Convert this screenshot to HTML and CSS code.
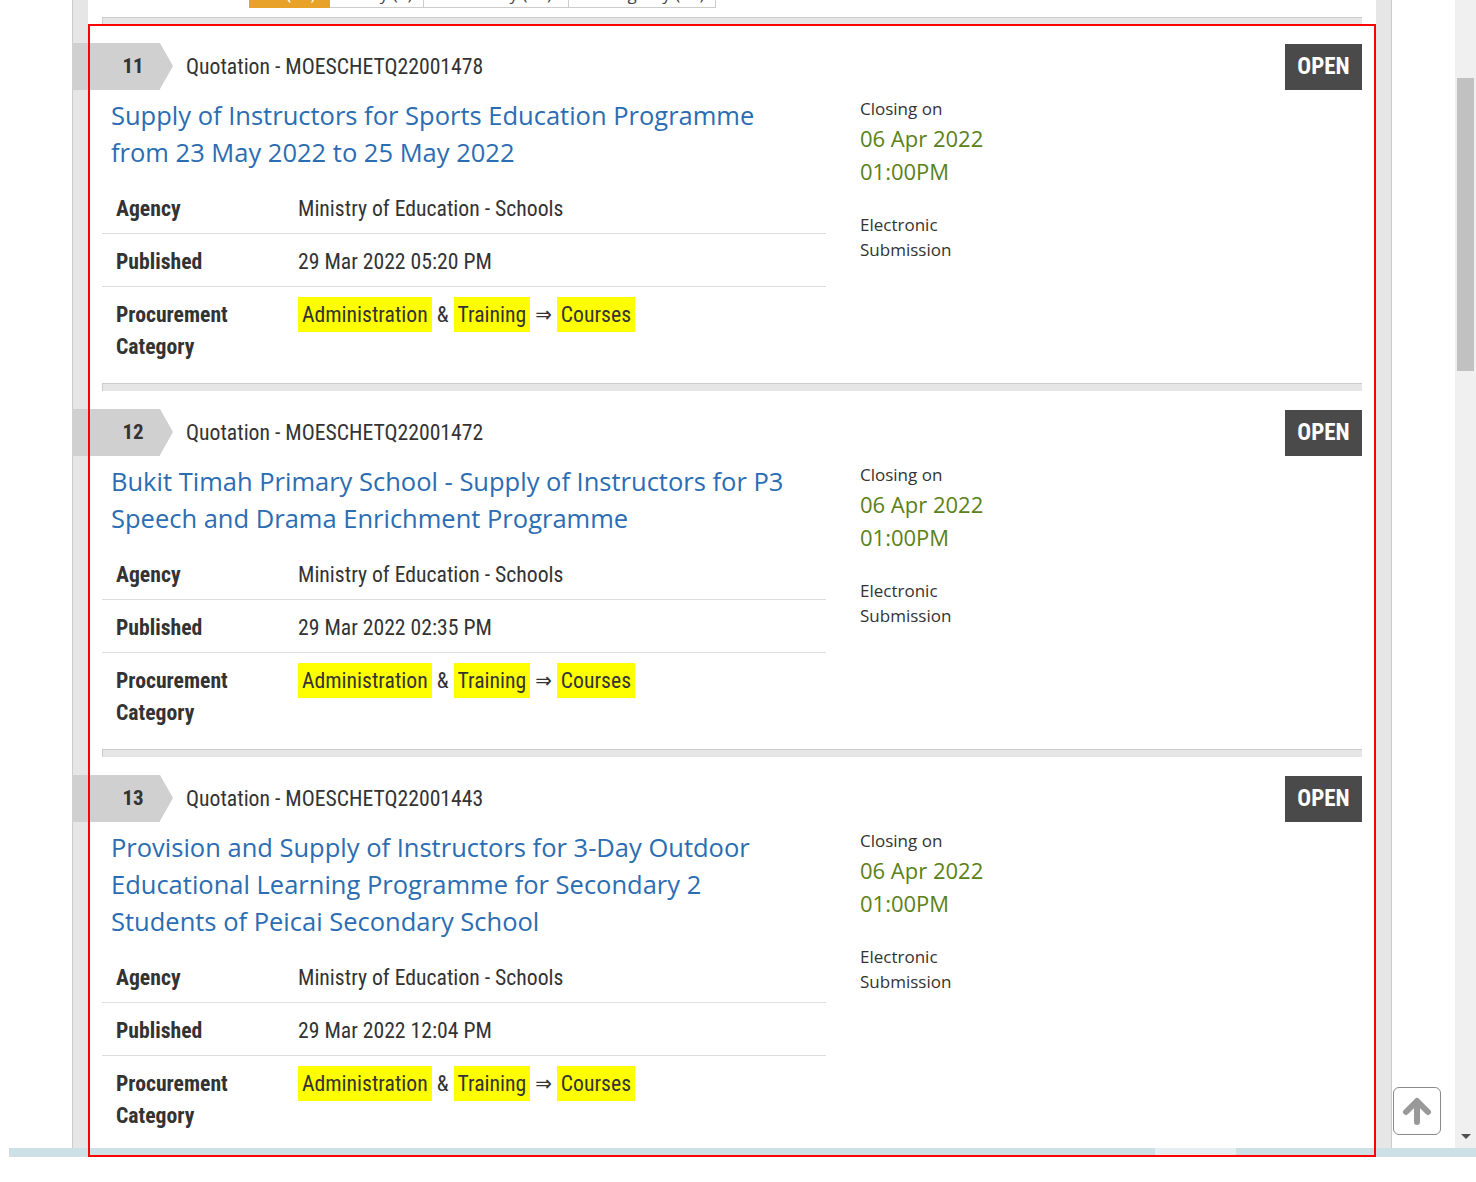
FILE: index.html
```html
<!DOCTYPE html>
<html lang="en">
<head>
<meta charset="utf-8">
<title>Opportunities</title>
<link rel="stylesheet" href="styles.css">
</head>
<body>
<div class="viewport">
  <div class="panel">
    <div class="content">
      <nav class="tabs">
        <span class="tab tab-open active">All (13)</span>
        <span class="tab tab-today">Today (1)</span>
        <span class="tab tab-yday">Yesterday (10)</span>
        <span class="tab tab-week">Closing Any (26)</span>
      </nav>
      <div class="sep"></div>

      <article class="item">
        <header class="item-head">
          <span class="num">11</span>
          <span class="ref">Quotation - MOESCHETQ22001478</span>
          <span class="status">OPEN</span>
        </header>
        <div class="item-body">
          <div class="main">
            <a class="title" href="#">Supply of Instructors for Sports Education Programme from 23 May 2022 to 25 May 2022</a>
            <table class="meta">
              <tr><th>Agency</th><td>Ministry of Education - Schools</td></tr>
              <tr><th>Published</th><td>29 Mar 2022 05:20 PM</td></tr>
              <tr><th>Procurement Category</th><td><span class="hl">Administration</span> &amp; <span class="hl">Training</span> <span class="arr">&rArr;</span> <span class="hl">Courses</span></td></tr>
            </table>
          </div>
          <aside class="side">
            <div class="closing-label">Closing on</div>
            <div class="closing-date">06 Apr 2022 01:00PM</div>
            <div class="submission">Electronic Submission</div>
          </aside>
        </div>
      </article>
      <div class="sep"></div>

      <article class="item">
        <header class="item-head">
          <span class="num">12</span>
          <span class="ref">Quotation - MOESCHETQ22001472</span>
          <span class="status">OPEN</span>
        </header>
        <div class="item-body">
          <div class="main">
            <a class="title" href="#">Bukit Timah Primary School - Supply of Instructors for P3 Speech and Drama Enrichment Programme</a>
            <table class="meta">
              <tr><th>Agency</th><td>Ministry of Education - Schools</td></tr>
              <tr><th>Published</th><td>29 Mar 2022 02:35 PM</td></tr>
              <tr><th>Procurement Category</th><td><span class="hl">Administration</span> &amp; <span class="hl">Training</span> <span class="arr">&rArr;</span> <span class="hl">Courses</span></td></tr>
            </table>
          </div>
          <aside class="side">
            <div class="closing-label">Closing on</div>
            <div class="closing-date">06 Apr 2022 01:00PM</div>
            <div class="submission">Electronic Submission</div>
          </aside>
        </div>
      </article>
      <div class="sep"></div>

      <article class="item">
        <header class="item-head">
          <span class="num">13</span>
          <span class="ref">Quotation - MOESCHETQ22001443</span>
          <span class="status">OPEN</span>
        </header>
        <div class="item-body">
          <div class="main">
            <a class="title" href="#">Provision and Supply of Instructors for 3-Day Outdoor Educational Learning Programme for Secondary 2 Students of Peicai Secondary School</a>
            <table class="meta">
              <tr><th>Agency</th><td>Ministry of Education - Schools</td></tr>
              <tr><th>Published</th><td>29 Mar 2022 12:04 PM</td></tr>
              <tr><th>Procurement Category</th><td><span class="hl">Administration</span> &amp; <span class="hl">Training</span> <span class="arr">&rArr;</span> <span class="hl">Courses</span></td></tr>
            </table>
          </div>
          <aside class="side">
            <div class="closing-label">Closing on</div>
            <div class="closing-date">06 Apr 2022 01:00PM</div>
            <div class="submission">Electronic Submission</div>
          </aside>
        </div>
      </article>
    </div>
  </div>
  <div class="gutter"></div>
  <div class="vscroll">
    <span class="vthumb"></span>
    <span class="vdown"></span>
  </div>
</div>
<div class="hscroll"><span class="hthumb"></span></div>

<button class="to-top" type="button" aria-label="Back to top">
  <svg width="30" height="28" viewBox="0 0 30 28" aria-hidden="true">
    <path d="M4 15 L15 4 L26 15" fill="none" stroke="#999" stroke-width="6" stroke-linecap="round" stroke-linejoin="round"/>
    <path d="M15 6 V25" fill="none" stroke="#999" stroke-width="6" stroke-linecap="round"/>
  </svg>
</button>
<div class="outline"></div>
</body>
</html>
```

FILE: styles.css
```css
* { box-sizing: border-box; }

html, body {
  margin: 0;
  padding: 0;
  background: #fff;
  overflow: hidden;
}

body {
  position: relative;
  width: 1476px;
  height: 1182px;
  font-family: "Open Sans", "Noto Sans", sans-serif;
  color: #333;
}

.viewport {
  display: flex;
  height: 1148px;
  padding-left: 72px;
  overflow: hidden;
}

.panel {
  width: 1320px;
  flex: none;
  background: #e6e6e6;
  border-left: 1px solid #ccc;
  border-right: 1px solid #ccc;
  padding: 0 15px;
}

.content {
  background: #fff;
  height: 100%;
  padding: 0 14px;
}

/* tabs (only their bottom edge is visible) */
.tabs {
  display: flex;
  height: 8px;
  overflow: hidden;
  padding-left: 147px;
}
.tab {
  display: flex;
  align-items: flex-end;
  justify-content: center;
  height: 40px;
  margin-top: -32px;
  padding-bottom: 4px;
  line-height: 19px;
  font-size: 17px;
  color: #444;
  border: 1px solid #ccc;
  border-left: none;
  background: #fff;
  white-space: nowrap;
}
.tab.active { background: #e8a22a; border-color: #e8a22a; color: #fff; }
.tab-open  { width: 81px; }
.tab-today { width: 94px; }
.tab-yday  { width: 145px; }
.tab-week  { width: 147px; }

.sep {
  height: 8px;
  background: #e6e6e6;
  border-top: 1px solid #ccc;
  border-left: 1px solid #ccc;
  margin-top: 9px;
}
.item + .sep { margin-top: 12px; }

.item { margin-top: 17px; }
.sep + .item { margin-top: 18px; }

.item-head {
  display: flex;
  align-items: center;
  height: 47px;
  margin-left: -30px;
  font-family: "Roboto Condensed", "Roboto", sans-serif;
  font-stretch: condensed;
}
.num {
  position: relative;
  width: 88px;
  height: 47px;
  background: #d0d0d0;
  padding-left: 34px;
  text-align: center;
  line-height: 47px;
  font-weight: 700;
  font-size: 21px;
  color: #333;
}
.num::after {
  content: "";
  position: absolute;
  top: 0;
  right: -13px;
  border-left: 13px solid #d0d0d0;
  border-top: 23.5px solid transparent;
  border-bottom: 23.5px solid transparent;
}
.ref {
  margin-left: 26px;
  font-size: 21.7px;
  color: #333;
}
.status {
  margin-left: auto;
  width: 77px;
  height: 46px;
  line-height: 46px;
  text-align: center;
  background: #4a4a4a;
  color: #fff;
  font-weight: 700;
  font-size: 23px;
}

.item-body {
  display: flex;
  margin-top: 9px;
}
.main { width: 724px; flex: none; }

.title {
  display: block;
  margin-top: -2px;
  padding: 0 22px 0 9px;
  font-size: 25.5px;
  line-height: 37px;
  color: #2b6db2;
  text-decoration: none;
}

.meta {
  width: 100%;
  margin-top: 10px;
  border-collapse: collapse;
  font-family: "Roboto Condensed", "Roboto", sans-serif;
  font-stretch: condensed;
  font-size: 21.7px;
  line-height: 32px;
  color: #333;
}
.meta tr { border-bottom: 1px solid #ddd; }
.meta tr:last-child { border-bottom: none; }
.meta th, .meta td {
  padding: 12px 0 8px 14px;
  vertical-align: top;
  text-align: left;
}
.meta th { width: 182px; font-weight: 700; padding-right: 20px; }
.meta td { font-weight: 400; }

.hl {
  background: #ffff00;
  padding: 5px 4px;
}
.arr { font-family: "DejaVu Sans", sans-serif; font-size: 22px; font-weight: 400; }

.side {
  width: 150px;
  margin-left: 34px;
}
.closing-label {
  font-size: 17px;
  line-height: 20px;
}
.closing-date {
  margin-top: 3px;
  font-size: 22px;
  line-height: 33px;
  color: #5b8118;
}
.submission {
  margin-top: 24px;
  font-size: 17px;
  line-height: 25px;
}

/* fake scrollbars */
.gutter { flex: 1; }
.vscroll {
  width: 21px;
  flex: none;
  background: #f0f0f0;
  display: flex;
  flex-direction: column;
  align-items: center;
}
.vthumb {
  margin-top: 78px;
  width: 17px;
  height: 293px;
  background: #c1c1c1;
}
.vdown {
  margin-top: auto;
  margin-bottom: 9px;
  border-top: 5px solid #505050;
  border-left: 5px solid transparent;
  border-right: 5px solid transparent;
}

.hscroll {
  height: 9px;
  margin-left: 9px;
  background: #cde0e6;
  padding-left: 1146px;
}
.hthumb {
  display: block;
  width: 81px;
  height: 9px;
  background: #e6f0f2;
}

.to-top {
  position: absolute;
  left: 1393px;
  top: 1087px;
  width: 48px;
  height: 48px;
  padding: 0;
  border: 1px solid #8a8a8a;
  border-radius: 6px;
  background: #fff;
  display: flex;
  align-items: center;
  justify-content: center;
}

.outline {
  position: absolute;
  left: 88px;
  top: 24px;
  width: 1288px;
  height: 1133px;
  border: 2px solid #ff0000;
  pointer-events: none;
}
```
